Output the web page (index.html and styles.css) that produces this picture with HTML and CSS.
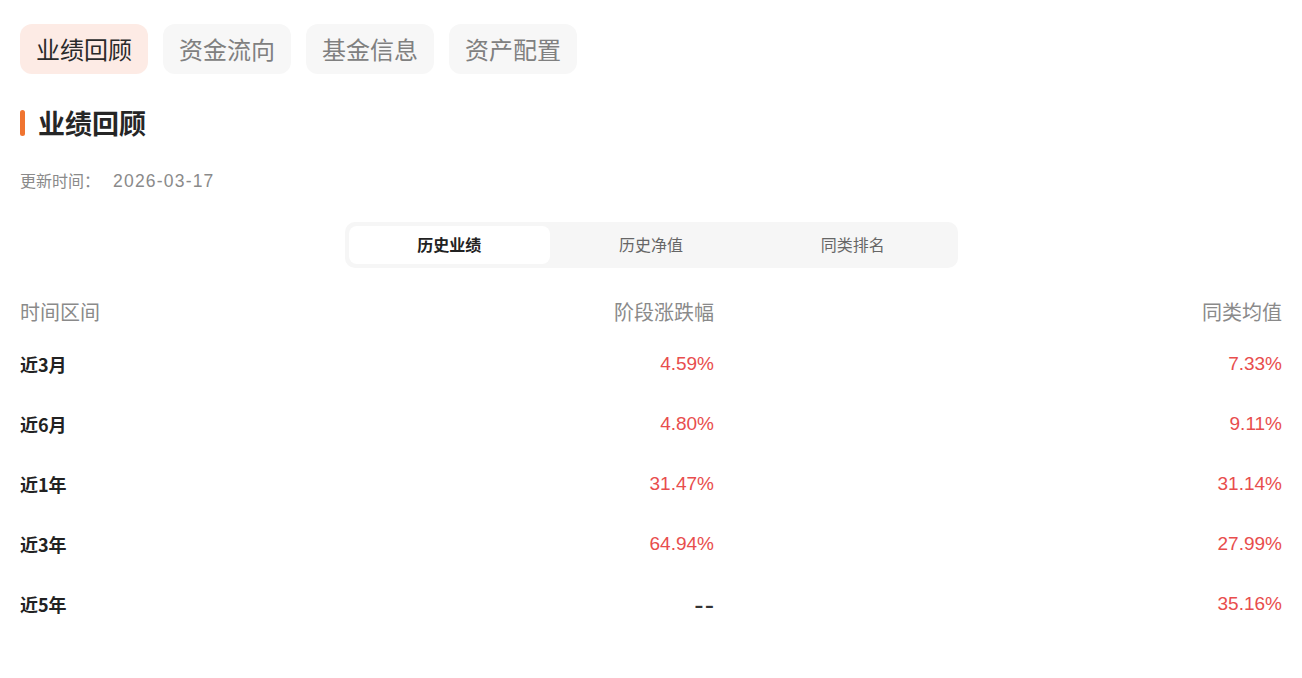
FILE: index.html
```html
<!DOCTYPE html>
<html lang="zh-CN">
<head>
<meta charset="utf-8">
<link rel="stylesheet" href="styles.css">
</head>
<body>
<div class="page">
  <nav class="tabs">
    <div class="tab active">业绩回顾</div>
    <div class="tab">资金流向</div>
    <div class="tab">基金信息</div>
    <div class="tab">资产配置</div>
  </nav>
  <h2 class="title">业绩回顾</h2>
  <div class="update">更新时间：<span class="date">2026-03-17</span></div>
  <div class="seg-wrap">
    <div class="seg">
      <div class="seg-item active">历史业绩</div>
      <div class="seg-item">历史净值</div>
      <div class="seg-item">同类排名</div>
    </div>
  </div>
  <div class="table">
    <div class="row head">
      <div class="c1">时间区间</div>
      <div class="c2">阶段涨跌幅</div>
      <div class="c3">同类均值</div>
    </div>
    <div class="row">
      <div class="c1 lbl">近3月</div>
      <div class="c2 up">4.59%</div>
      <div class="c3 up">7.33%</div>
    </div>
    <div class="row">
      <div class="c1 lbl">近6月</div>
      <div class="c2 up">4.80%</div>
      <div class="c3 up">9.11%</div>
    </div>
    <div class="row">
      <div class="c1 lbl">近1年</div>
      <div class="c2 up">31.47%</div>
      <div class="c3 up">31.14%</div>
    </div>
    <div class="row">
      <div class="c1 lbl">近3年</div>
      <div class="c2 up">64.94%</div>
      <div class="c3 up">27.99%</div>
    </div>
    <div class="row">
      <div class="c1 lbl">近5年</div>
      <div class="c2 none">--</div>
      <div class="c3 up">35.16%</div>
    </div>
  </div>
</div>
</body>
</html>
```
FILE: styles.css
```css
* { box-sizing: border-box; }
html, body { margin: 0; padding: 0; background: #fff; }
body {
  font-family: "Noto Sans CJK SC", "Liberation Sans", sans-serif;
  color: #222;
}
.page { padding: 24px 20px 0 20px; width: 1302px; }

.tabs { display: flex; gap: 15px; }
.tab {
  width: 128px;
  height: 50px;
  border-radius: 12px;
  background: #f7f7f7;
  color: #808080;
  font-size: 24px;
  display: flex;
  align-items: center;
  justify-content: center;
  line-height: 1;
}
.tab.active { background: #fdebe5; color: #2a2a2a; }

.title {
  margin: 35px 0 0 0;
  height: 28px;
  font-size: 27px;
  font-weight: 700;
  line-height: 28px;
  color: #262626;
  display: flex;
  align-items: center;
}
.title::before {
  content: "";
  width: 5px;
  height: 26px;
  background: #f07430;
  border-radius: 3px;
  margin-right: 13px;
}

.update {
  margin-top: 32px;
  font-size: 16px;
  color: #8a8a8a;
  line-height: 22px;
}
.update .date {
  margin-left: 13px;
  font-size: 17.5px;
  letter-spacing: 1.2px;
  font-family: "Liberation Sans", "Noto Sans CJK SC", sans-serif;
}

.seg-wrap { display: flex; justify-content: center; margin-top: 30px; }
.seg {
  width: 613px;
  height: 46px;
  background: #f6f6f6;
  border-radius: 10px;
  padding: 4px;
  display: flex;
}
.seg-item {
  flex: 1;
  display: flex;
  align-items: center;
  justify-content: center;
  font-size: 16px;
  color: #666;
  border-radius: 8px;
  padding-bottom: 3px;
}
.seg-item.active { background: #fff; color: #222; font-weight: 700; }

.table { margin-top: 22px; }
.row {
  display: grid;
  grid-template-columns: 347px 347px 1fr;
  height: 60px;
  align-items: center;
  font-size: 18px;
}
.row.head { height: 42px; font-size: 20px; color: #8a8a8a; margin-bottom: 2px; }
.c2, .c3 { text-align: right; }
.lbl { font-weight: 700; color: #222; }
.up { color: #e84d4d; font-size: 19px; font-family: "Liberation Sans", "Noto Sans CJK SC", sans-serif; }
.none {
  color: #333;
  font-size: 28px;
  line-height: 1;
  letter-spacing: 1px;
  margin-right: -1px;
  padding-top: 2px;
  font-family: "Liberation Sans", sans-serif;
}
```
